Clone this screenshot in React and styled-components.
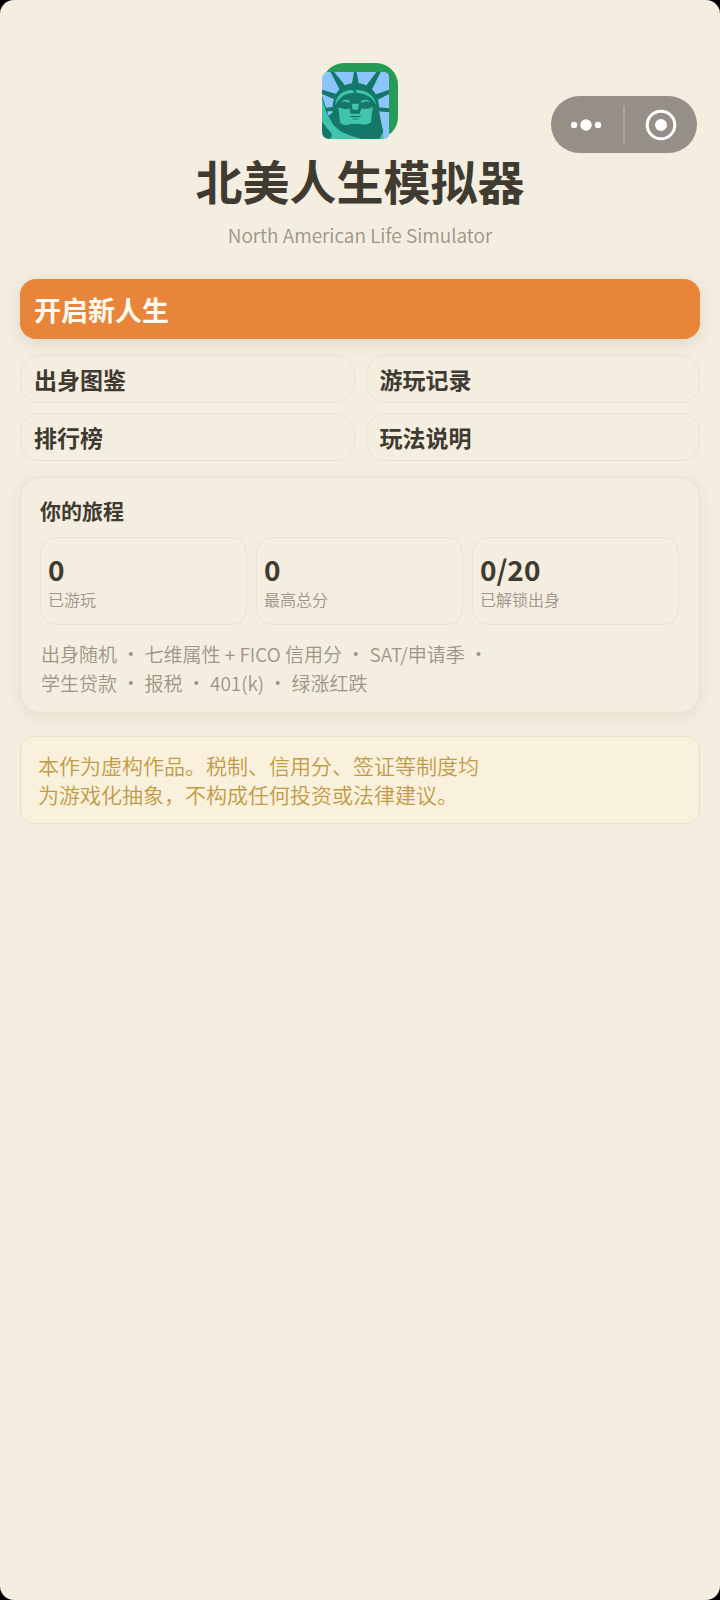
import React from "react";
import styled, { createGlobalStyle } from "styled-components";

const GlobalStyle = createGlobalStyle`
  * {
    box-sizing: border-box;
  }

  body {
    margin: 0;
    background: #000;
    color: #403b30;
    font-family: "Noto Sans CJK SC", "Noto Sans", sans-serif;
  }

  button {
    font-family: inherit;
    cursor: pointer;
  }
`;

const Page = styled.main`
  position: relative;
  min-height: 100vh;
  padding: 63px 20px 40px;
  border-radius: 14px;
  background: #f4eee0;
`;

const Capsule = styled.div`
  position: absolute;
  top: 96px;
  right: 23px;
  display: flex;
  align-items: center;
  width: 146px;
  height: 57px;
  border-radius: 29px;
  background: #958f88;
`;

const CapsuleButton = styled.button`
  flex: 1;
  display: flex;
  align-items: center;
  justify-content: center;
  height: 100%;
  padding: 0;
  border: none;
  background: none;
`;

const CapsuleDivider = styled.span`
  width: 2px;
  height: 37px;
  background: #a9a39b;
`;

const Header = styled.header`
  display: flex;
  flex-direction: column;
  align-items: center;
`;

const Title = styled.h1`
  margin: 7px 0 0;
  font-size: 47px;
  line-height: 68px;
  font-weight: 700;
`;

const Subtitle = styled.p`
  margin: 6px 0 0;
  font-size: 19px;
  line-height: 30px;
  font-weight: 350;
  color: #9c9585;
`;

const StartButton = styled.button`
  display: block;
  width: 100%;
  height: 60px;
  margin-top: 29px;
  padding: 0 14px;
  border: none;
  border-radius: 16px;
  background: #e8853a;
  box-shadow: 0 4px 16px rgba(80, 80, 40, 0.14);
  color: #fffaf0;
  font-size: 27px;
  font-weight: 700;
  text-align: left;
`;

const Menu = styled.nav`
  display: grid;
  grid-template-columns: 1fr 1fr;
  gap: 10px 11px;
  margin-top: 16px;
`;

const MenuButton = styled.button`
  height: 48px;
  padding: 0 13px;
  border: 1px solid #e9e1d1;
  border-radius: 20px;
  background: #f4eee0;
  color: #403b30;
  font-size: 23px;
  font-weight: 700;
  text-align: left;
`;

const Card = styled.section`
  margin-top: 16px;
  padding: 18px 20px 15px 19px;
  border: 1px solid #e9e1d1;
  border-radius: 20px;
  background: #f4eee0;
  box-shadow: 0 4px 16px rgba(80, 60, 20, 0.08);
`;

const CardTitle = styled.h2`
  margin: 0;
  font-size: 21px;
  line-height: 28px;
  font-weight: 700;
`;

const Stats = styled.div`
  display: grid;
  grid-template-columns: repeat(3, 1fr);
  gap: 9px;
  margin-top: 13px;
`;

const Stat = styled.div`
  padding: 14px 7px 12px;
  border: 1px solid #e9e1d1;
  border-radius: 16px;
`;

const StatValue = styled.div`
  font-size: 28px;
  line-height: 34px;
  font-weight: 700;
`;

const StatLabel = styled.div`
  font-size: 16px;
  line-height: 26px;
  font-weight: 350;
  color: #9c9585;
`;

const Features = styled.p`
  margin: 14px 0 0 1px;
  font-size: 19px;
  line-height: 29px;
  font-weight: 350;
  color: #9c9585;
`;

const Notice = styled.aside`
  margin-top: 23px;
  padding: 14px 17px;
  border: 1px solid #eae0c8;
  border-radius: 14px;
  background: #faf1dc;
  color: #c09a45;
  font-size: 21px;
  line-height: 29px;
  font-weight: 350;
`;

const menuItems = ["出身图鉴", "游玩记录", "排行榜", "玩法说明"];

const stats = [
  { value: "0", label: "已游玩" },
  { value: "0", label: "最高总分" },
  { value: "0/20", label: "已解锁出身" },
];

function Logo() {
  return (
    <svg width="76" height="76" viewBox="36 24 228 228" aria-hidden="true">
      <defs>
        <clipPath id="tile">
          <path d="M50 50H218Q238 50 238 70V234Q238 252 220 252H60Q36 252 36 228V68Q40 54 50 50Z" />
        </clipPath>
      </defs>
      <rect x="36" y="24" width="228" height="228" rx="66" fill="#259b55" />
      <g clipPath="url(#tile)">
        <rect x="36" y="50" width="202" height="202" fill="#8cc5fb" />
        <g fill="#147868">
          <path d="M132 50H140L148 95H124Z" />
          <path d="M61 50H72L106 92L90 106Z" />
          <path d="M36 104L80 117L72 133L36 117Z" />
          <path d="M36 160L73 155V168L36 170Z" />
          <path d="M200 50H212L185 106L168 92Z" />
          <path d="M238 104V116L204 134L193 119Z" />
          <path d="M238 160V172L202 169V157Z" />
          <path d="M36 122L56 182L68 172C64 112 98 84 136 84C178 84 210 112 208 172L214 204L220 230L210 252H36Z" />
        </g>
        <g fill="#40c4ac">
          <path d="M76 150C77 120 103 104 127 105L134 114C108 113 90 124 76 150Z" />
          <path d="M136 105C173 103 194 124 199 150C184 124 163 114 141 115Z" />
          <path d="M92 142C100 132 114 132 121 140L116 143Q104 137 92 142Z" />
          <path d="M151 140C161 132 175 132 182 142Q168 137 156 143Z" />
          <path d="M85 157Q106 166 118 160L122 176H149L154 160Q168 166 188 156L183 201Q178 208 165 209C146 205 127 205 110 210Q94 210 90 202Z" />
          <path d="M125 146H147L144 164H128Z" />
          <path d="M36 180C54 190 68 209 88 226C102 236 127 244 156 252H58C70 246 66 235 57 226C48 217 43 207 36 200Z" />
          <path d="M36 129L49 172L68 206L36 182Z" />
          <path d="M210 252Q213 236 221 234Q218 245 222 252Z" />
        </g>
        <g fill="#147868">
          <path d="M116 185Q127 181 135 183Q145 181 156 185Q136 189 116 185Z" />
          <path d="M124 191H149Q137 196 124 191Z" />
        </g>
        <circle cx="58" cy="177" r="3" fill="#8cc5fb" />
      </g>
    </svg>
  );
}

function App() {
  return (
    <>
      <GlobalStyle />
      <Page>
        <Capsule>
          <CapsuleButton aria-label="更多">
            <svg width="32" height="12" viewBox="0 0 32 12" fill="#fff">
              <circle cx="3" cy="6" r="3.2" />
              <circle cx="15" cy="6" r="5.7" />
              <circle cx="27" cy="6" r="3.2" />
            </svg>
          </CapsuleButton>
          <CapsuleDivider />
          <CapsuleButton aria-label="关闭">
            <svg width="32" height="32" viewBox="0 0 32 32">
              <circle cx="16" cy="16" r="13.8" fill="none" stroke="#fff" strokeWidth="3" />
              <circle cx="16" cy="16" r="6" fill="#fff" />
            </svg>
          </CapsuleButton>
        </Capsule>

        <Header>
          <Logo />
          <Title>北美人生模拟器</Title>
          <Subtitle>North American Life Simulator</Subtitle>
        </Header>

        <StartButton>开启新人生</StartButton>
        <Menu>
          {menuItems.map((item) => (
            <MenuButton key={item}>{item}</MenuButton>
          ))}
        </Menu>

        <Card>
          <CardTitle>你的旅程</CardTitle>
          <Stats>
            {stats.map(({ value, label }) => (
              <Stat key={label}>
                <StatValue>{value}</StatValue>
                <StatLabel>{label}</StatLabel>
              </Stat>
            ))}
          </Stats>
          <Features>
            出身随机 · 七维属性 + FICO 信用分 · SAT/申请季 ·
            <br />
            学生贷款 · 报税 · 401(k) · 绿涨红跌
          </Features>
        </Card>

        <Notice>
          本作为虚构作品。税制、信用分、签证等制度均
          <br />
          为游戏化抽象，不构成任何投资或法律建议。
        </Notice>
      </Page>
    </>
  );
}

export default App;
